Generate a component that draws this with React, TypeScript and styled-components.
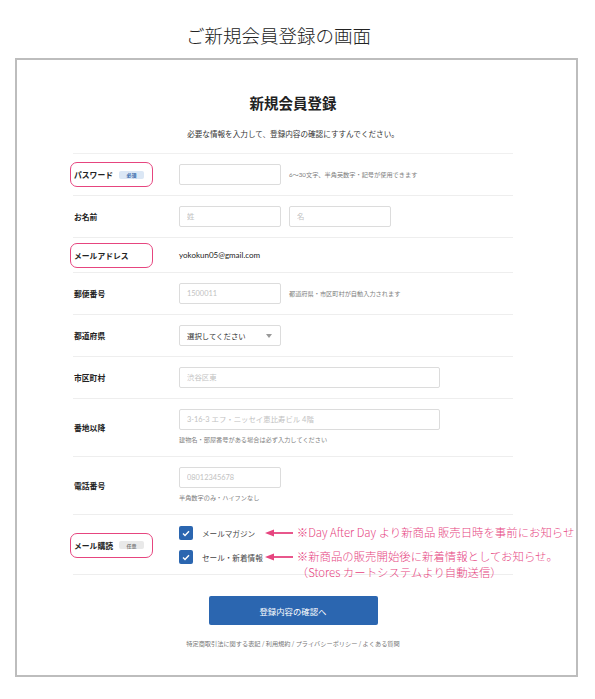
import { FC, ReactNode } from "react";
import styled, { createGlobalStyle } from "styled-components";

const GlobalStyle = createGlobalStyle`
  html, body {
    margin: 0;
    padding: 0;
    background: #fff;
  }
  body {
    font-family: Lato, "Noto Sans CJK JP", sans-serif;
    color: #222;
  }
`;

const pink = "#e6457f";
const blue = "#2b66b0";

export default function App() {
  return (
    <>
      <GlobalStyle />
      <Page>
        <PageTitle>ご新規会員登録の画面</PageTitle>
        <Frame>
          <FormColumn>
            <Heading>新規会員登録</Heading>
            <Lead>必要な情報を入力して、登録内容の確認にすすんでください。</Lead>
            <Rows>
              <FormRow label="パスワード" badge={<Badge kind="required">必須</Badge>} highlight>
                <Inline>
                  <Input width={102} />
                  <Hint>6〜30文字、半角英数字・記号が使用できます</Hint>
                </Inline>
              </FormRow>
              <FormRow label="お名前">
                <Inline>
                  <Input width={102} placeholder="姓" />
                  <Input width={102} placeholder="名" />
                </Inline>
              </FormRow>
              <FormRow label="メールアドレス" highlight compact>
                <Email>yokokun05@gmail.com</Email>
              </FormRow>
              <FormRow label="郵便番号">
                <Inline>
                  <Input width={102} placeholder="1500011" />
                  <Hint>都道府県・市区町村が自動入力されます</Hint>
                </Inline>
              </FormRow>
              <FormRow label="都道府県">
                <Select>
                  選択してください
                  <Caret />
                </Select>
              </FormRow>
              <FormRow label="市区町村">
                <Input width={261} placeholder="渋谷区東" />
              </FormRow>
              <FormRow label="番地以降" tall>
                <Input width={261} placeholder="3-16-3 エフ・ニッセイ恵比寿ビル 4階" />
                <SubHint>建物名・部屋番号がある場合は必ず入力してください</SubHint>
              </FormRow>
              <FormRow label="電話番号" tall>
                <Input width={102} placeholder="08012345678" />
                <SubHint>半角数字のみ・ハイフンなし</SubHint>
              </FormRow>
              <FormRow label="メール購読" badge={<Badge kind="optional">任意</Badge>} highlight checks>
                <CheckList>
                  <CheckLine>
                    <CheckBox />
                    <CheckText>メールマガジン</CheckText>
                    <Note>
                      <Arrow />
                      <NoteText>※Day After Day より新商品 販売日時を事前にお知らせ</NoteText>
                    </Note>
                  </CheckLine>
                  <CheckLine>
                    <CheckBox />
                    <CheckText>セール・新着情報</CheckText>
                    <Note>
                      <Arrow />
                      <NoteText>
                        ※新商品の販売開始後に新着情報としてお知らせ。
                        <br />
                        （Stores カートシステムより自動送信）
                      </NoteText>
                    </Note>
                  </CheckLine>
                </CheckList>
              </FormRow>
            </Rows>
            <SubmitButton>登録内容の確認へ</SubmitButton>
            <FooterLinks>特定商取引法に関する表記 / 利用規約 / プライバシーポリシー / よくある質問</FooterLinks>
          </FormColumn>
        </Frame>
      </Page>
    </>
  );
}

interface FormRowProps {
  label: string;
  badge?: ReactNode;
  highlight?: boolean;
  compact?: boolean;
  tall?: boolean;
  checks?: boolean;
  children: ReactNode;
}
const FormRow: FC<FormRowProps> = ({ label, badge, highlight, compact, tall, checks, children }) => (
  <Row $compact={compact} $tall={tall} $checks={checks}>
    <LabelCell>
      <Label $highlight={highlight}>
        {label}
        {badge}
      </Label>
    </LabelCell>
    <Field>{children}</Field>
  </Row>
);

const CheckBox: FC = () => (
  <Box>
    <svg width="8" height="7" viewBox="0 0 8 7">
      <polyline points="1,3.6 3,5.5 7,1.3" fill="none" stroke="#fff" strokeWidth="1.4" />
    </svg>
  </Box>
);

const Arrow: FC = () => (
  <svg width="28" height="8" viewBox="0 0 28 8">
    <polygon points="0,4 9,0.5 9,7.5" fill={pink} />
    <line x1="8" y1="4" x2="28" y2="4" stroke={pink} strokeWidth="1.8" />
  </svg>
);

const Page = styled.div`
  width: 595px;
  height: 699px;
`;

const PageTitle = styled.h1`
  margin: 0;
  height: 58px;
  box-sizing: border-box;
  padding: 23px 0 0 186px;
  font-family: "Noto Sans CJK JP", sans-serif;
  font-size: 18.5px;
  font-weight: 300;
  line-height: 24px;
  color: #222;
`;

const Frame = styled.div`
  margin-left: 15px;
  width: 563px;
  height: 619px;
  box-sizing: border-box;
  border: 2px solid #bdbdbd;
`;

const FormColumn = styled.div`
  width: 440px;
  margin-left: 56px;
  padding-top: 33px;
  display: flex;
  flex-direction: column;
  align-items: center;
`;

const Heading = styled.h2`
  margin: 0;
  font-family: "Noto Sans CJK JP", sans-serif;
  font-size: 14.5px;
  font-weight: 700;
  line-height: 20px;
  color: #222;
`;

const Lead = styled.p`
  margin: 15px 0 0;
  font-family: "Noto Sans CJK JP", sans-serif;
  font-size: 7.6px;
  line-height: 12px;
  color: #333;
`;

const Rows = styled.div`
  width: 100%;
  margin-top: 13px;
  border-top: 1px solid #f0f0f0;
`;

const Row = styled.div<{ $compact?: boolean; $tall?: boolean; $checks?: boolean }>`
  display: grid;
  grid-template-columns: 106px 1fr;
  align-items: center;
  border-bottom: 1px solid #eeeeee;
  padding: ${(p) => (p.$compact ? "10px 0" : p.$tall ? "10px 0 11px" : p.$checks ? "11px 0 10px" : "10px 0")};
`;

/* zero-height cell so the outlined label can overflow without growing the row */
const LabelCell = styled.div`
  display: flex;
  align-items: center;
  height: 0;
`;

const Label = styled.div<{ $highlight?: boolean }>`
  display: flex;
  flex: none;
  align-items: center;
  gap: 6px;
  box-sizing: border-box;
  width: 83px;
  height: 25px;
  margin-left: -3px;
  padding-left: 3px;
  border: 1px solid ${(p) => (p.$highlight ? pink : "transparent")};
  border-radius: 7px;
  font-family: "Noto Sans CJK JP", sans-serif;
  font-size: 7.8px;
  font-weight: 700;
  color: #222;
  white-space: nowrap;
`;

const Badge = styled.span<{ kind: "required" | "optional" }>`
  display: inline-flex;
  align-items: center;
  justify-content: center;
  width: 25px;
  height: 8px;
  border-radius: 2px;
  font-size: 5px;
  font-weight: 700;
  background: ${(p) => (p.kind === "required" ? "#dbe7f5" : "#e9e9e9")};
  color: ${(p) => (p.kind === "required" ? "#2f63a8" : "#7e7e7e")};
`;

const Field = styled.div`
  display: flex;
  flex-direction: column;
  align-items: flex-start;
`;

const Inline = styled.div`
  display: flex;
  align-items: center;
  gap: 8px;
`;

const Input = styled.input<{ width: number }>`
  box-sizing: border-box;
  width: ${(p) => p.width}px;
  height: 21px;
  margin: 0;
  padding: 0 7px;
  border: 1px solid #dcdcdc;
  border-radius: 2px;
  background: #fff;
  font-family: Lato, "Noto Sans CJK JP", sans-serif;
  font-size: 7.4px;
  color: #333;
  outline: none;
  &::placeholder {
    color: #c2c2c2;
  }
`;

const Hint = styled.span`
  font-family: Lato, "Noto Sans CJK JP", sans-serif;
  font-size: 6.2px;
  color: #808080;
`;

const SubHint = styled(Hint)`
  display: block;
  margin-top: 5px;
  line-height: 10px;
`;

const Email = styled.span`
  font-family: Lato, "Noto Sans CJK JP", sans-serif;
  font-size: 8px;
  line-height: 14px;
  color: #222;
`;

const Select = styled.div`
  box-sizing: border-box;
  display: flex;
  align-items: center;
  justify-content: space-between;
  width: 102px;
  height: 21px;
  padding: 0 8px 0 7px;
  border: 1px solid #dcdcdc;
  border-radius: 2px;
  font-family: "Noto Sans CJK JP", sans-serif;
  font-size: 7.4px;
  color: #333;
`;

const Caret = styled.span`
  width: 0;
  height: 0;
  border-left: 3px solid transparent;
  border-right: 3px solid transparent;
  border-top: 4px solid #999;
`;

const CheckList = styled.div`
  display: flex;
  flex-direction: column;
  gap: 10px;
`;

const CheckLine = styled.div`
  position: relative;
  display: flex;
  align-items: center;
  height: 14px;
`;

const Box = styled.span`
  display: inline-flex;
  align-items: center;
  justify-content: center;
  width: 14px;
  height: 14px;
  border-radius: 2px;
  background: ${blue};
`;

const CheckText = styled.span`
  margin-left: 9px;
  font-family: "Noto Sans CJK JP", sans-serif;
  font-size: 7.6px;
  color: #444;
  white-space: nowrap;
`;

const Note = styled.div`
  position: absolute;
  left: calc(100% + 2px);
  top: 3px;
  display: flex;
  align-items: flex-start;
  gap: 4px;
  white-space: nowrap;
  svg {
    flex: none;
  }
`;

const NoteText = styled.span`
  margin-top: -5px;
  font-family: "Noto Sans CJK JP", sans-serif;
  font-size: 11.4px;
  font-weight: 300;
  line-height: 16px;
  color: ${pink};
`;

const SubmitButton = styled.button`
  margin-top: 21px;
  width: 169px;
  height: 29px;
  border: none;
  border-radius: 2px;
  background: ${blue};
  color: #fff;
  font-family: "Noto Sans CJK JP", sans-serif;
  font-size: 8.4px;
  cursor: pointer;
`;

const FooterLinks = styled.p`
  margin: 14px 0 0;
  font-family: "Noto Sans CJK JP", sans-serif;
  font-size: 6.2px;
  line-height: 10px;
  color: #777;
`;
